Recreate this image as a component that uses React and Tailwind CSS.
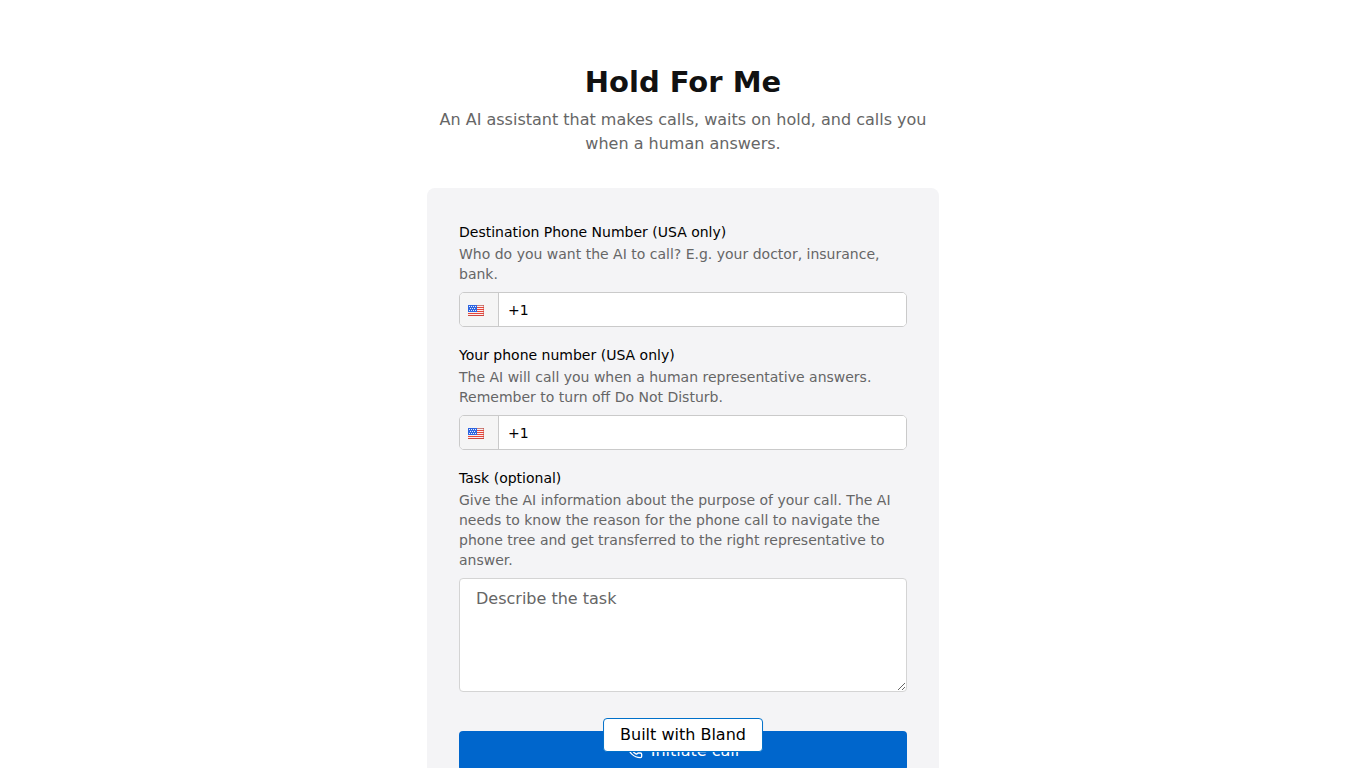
import { PhoneCall } from "lucide-react";

const STRIPES = [0, 2, 4, 6, 8, 10];

function UsFlag() {
  return (
    <svg width="16" height="11" viewBox="0 0 16 11" shapeRendering="crispEdges" aria-hidden="true">
      <rect width="16" height="11" fill="#fbeeee" />
      {STRIPES.map((y) => (
        <rect key={y} y={y} width="16" height="1" fill="#e5483c" />
      ))}
      <rect width="16" height="1" fill="#c98079" />
      <rect y="10" width="16" height="1" fill="#d0453d" />
      <rect x="15" width="1" height="11" fill="#c9483f" fillOpacity="0.5" />
      <rect width="9" height="7" fill="#2f66e0" />
      <path
        d="M1 1h1v1H1zM3 1h1v1H3zM5 1h1v1H5zM7 1h1v1H7zM2 3h1v1H2zM4 3h1v1H4zM6 3h1v1H6zM1 5h1v1H1zM3 5h1v1H3zM5 5h1v1H5zM7 5h1v1H7z"
        fill="#e6edff"
      />
    </svg>
  );
}

function PhoneField({ id, label, hint }) {
  return (
    <div>
      <label htmlFor={id} className="block text-sm leading-6 text-black">
        {label}
      </label>
      <p id={`${id}-hint`} className="text-sm text-[#666666]">
        {hint}
      </p>
      <div className="mt-2 flex h-[35px] overflow-hidden rounded-[5px] border border-[#cacaca] bg-white">
        <button
          type="button"
          aria-label="Country: United States"
          className="flex w-[39px] shrink-0 items-start border-r border-[#cacaca] bg-[#f5f5f5] pt-3 pl-2"
        >
          <UsFlag />
        </button>
        <input
          id={id}
          type="tel"
          defaultValue="+1"
          aria-describedby={`${id}-hint`}
          className="min-w-0 flex-1 bg-white pl-[9px] text-sm text-black outline-none"
        />
      </div>
    </div>
  );
}

export default function App() {
  return (
    <main className="bg-white px-4 py-16 font-['DejaVu_Sans',sans-serif]">
      <div className="mx-auto max-w-lg">
        <header className="text-center">
          <h1 className="text-[29px] leading-9 font-bold text-[#111111]">Hold For Me</h1>
          <p className="mt-2 text-base text-[#666666]">
            An AI assistant that makes calls, waits on hold, and calls you when a human answers.
          </p>
        </header>

        <form className="mt-8 flex flex-col gap-4 rounded-lg bg-[#f4f4f6] p-8">
          <PhoneField
            id="destination"
            label="Destination Phone Number (USA only)"
            hint="Who do you want the AI to call? E.g. your doctor, insurance, bank."
          />
          <PhoneField
            id="own-number"
            label="Your phone number (USA only)"
            hint="The AI will call you when a human representative answers. Remember to turn off Do Not Disturb."
          />
          <div>
            <label htmlFor="task" className="block text-sm leading-6 text-black">
              Task (optional)
            </label>
            <p id="task-hint" className="text-sm text-[#666666]">
              Give the AI information about the purpose of your call. The AI needs to know the reason for the
              phone call to navigate the phone tree and get transferred to the right representative to answer.
            </p>
            <textarea
              id="task"
              rows={4}
              placeholder="Describe the task"
              aria-describedby="task-hint"
              className="mt-2 block w-full rounded border border-[#d4d4d4] bg-white px-4 py-2 text-base text-black placeholder:text-[#666666]"
            />
          </div>
          <button
            type="button"
            className="mt-[23px] flex h-10 w-full items-center justify-center gap-2 rounded-sm bg-[#0066cc] text-base text-white"
          >
            <PhoneCall size={16} />
            Initiate call
          </button>
        </form>
      </div>

      <a
        href="#bland"
        className="fixed bottom-4 left-1/2 -translate-x-1/2 rounded border border-[#0070c9] bg-white px-4 py-1 text-base whitespace-nowrap text-black"
      >
        Built with Bland
      </a>
    </main>
  );
}
